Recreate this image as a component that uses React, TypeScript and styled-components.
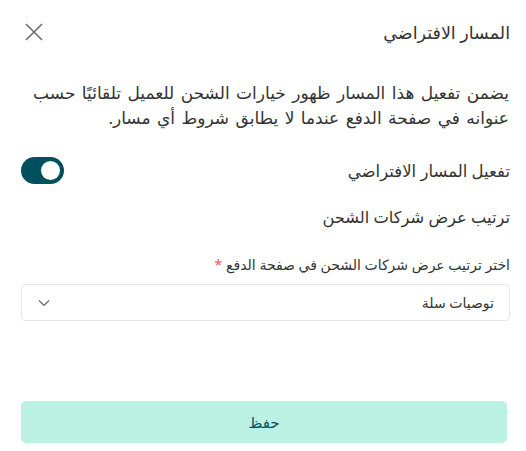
import React, { useState } from "react";
import styled, { createGlobalStyle } from "styled-components";

const Global = createGlobalStyle`
  html, body { margin: 0; padding: 0; background: #fff; }
  body { font-family: "Noto Sans", "DejaVu Sans", sans-serif; }
`;

const Panel = styled.div`
  direction: rtl;
  width: 526px;
  height: 451px;
  box-sizing: border-box;
  padding: 0 16px 0 21px;
  display: flex;
  flex-direction: column;
  color: #333;
`;

const Header = styled.div`
  display: flex;
  align-items: center;
  justify-content: space-between;
  height: 64px;
`;

const Title = styled.h2`
  margin: 0;
  font-size: 17.5px;
  font-weight: 400;
  color: #333;
`;

const CloseButton = styled.button`
  border: 0;
  background: none;
  padding: 0;
  width: 28px;
  height: 28px;
  display: flex;
  align-items: center;
  justify-content: center;
  margin-left: -1px;
  cursor: pointer;
`;

const Description = styled.p`
  margin: 16px 1px 0 0;
  font-size: 17px;
  word-spacing: 2px;
  line-height: 25px;
  color: #333;
`;

const ToggleRow = styled.div`
  display: flex;
  align-items: center;
  justify-content: space-between;
  margin-top: 26px;
  height: 28px;
`;

const Label = styled.span`
  font-size: 16.5px;
  color: #333;
`;

const Switch = styled.button<{ $on: boolean }>`
  direction: ltr;
  width: 43px;
  height: 27px;
  border-radius: 14px;
  border: 0;
  padding: 0 4px;
  background: ${(p) => (p.$on ? "#004f5c" : "#ccc")};
  display: flex;
  align-items: center;
  justify-content: ${(p) => (p.$on ? "flex-end" : "flex-start")};
  cursor: pointer;
`;

const Knob = styled.span`
  width: 19px;
  height: 19px;
  border-radius: 50%;
  background: #fff;
`;

const SectionTitle = styled.h3`
  margin: 22px 0 0;
  font-size: 16.3px;
  font-weight: 400;
  color: #333;
`;

const FieldLabel = styled.label`
  margin-top: 27px;
  font-size: 14px;
  color: #333;
  display: flex;
  gap: 4px;
`;

const Required = styled.span`
  color: #f05a5a;
`;

const Select = styled.div`
  margin-top: 10px;
  height: 37px;
  border: 1px solid #e6e6e6;
  border-radius: 4px;
  display: flex;
  align-items: center;
  justify-content: space-between;
  padding: 0 15px 0 16px;
  font-size: 14px;
  color: #333;
  box-sizing: border-box;
`;

const Spacer = styled.div`
  flex: 1;
`;

const SaveButton = styled.button`
  height: 42px;
  border: 0;
  border-radius: 5px;
  background: #baf1e3;
  color: #00525e;
  font-family: inherit;
  font-size: 15px;
  margin: 0 3px 8px 0;
  cursor: pointer;
`;

export default function App() {
  const [on, setOn] = useState(true);
  return (
    <>
      <Global />
      <Panel>
        <Header>
          <Title>المسار الافتراضي</Title>
          <CloseButton aria-label="close">
            <svg width="20" height="20" viewBox="0 0 20 20">
              <path d="M2 2 L18 18 M18 2 L2 18" stroke="#666" strokeWidth="1.5" fill="none" />
            </svg>
          </CloseButton>
        </Header>
        <Description>
          يضمن تفعيل هذا المسار ظهور خيارات الشحن للعميل تلقائيًا حسب عنوانه في صفحة الدفع عندما لا يطابق شروط أي مسار.
        </Description>
        <ToggleRow>
          <Label>تفعيل المسار الافتراضي</Label>
          <Switch $on={on} onClick={() => setOn(!on)} aria-label="toggle">
            <Knob />
          </Switch>
        </ToggleRow>
        <SectionTitle>ترتيب عرض شركات الشحن</SectionTitle>
        <FieldLabel>
          اختر ترتيب عرض شركات الشحن في صفحة الدفع <Required>*</Required>
        </FieldLabel>
        <Select>
          <span>توصيات سلة</span>
          <svg width="12" height="8" viewBox="0 0 12 8">
            <path d="M1 1.5 L6 6.5 L11 1.5" stroke="#666" strokeWidth="1.2" fill="none" />
          </svg>
        </Select>
        <Spacer />
        <SaveButton>حفظ</SaveButton>
      </Panel>
    </>
  );
}
